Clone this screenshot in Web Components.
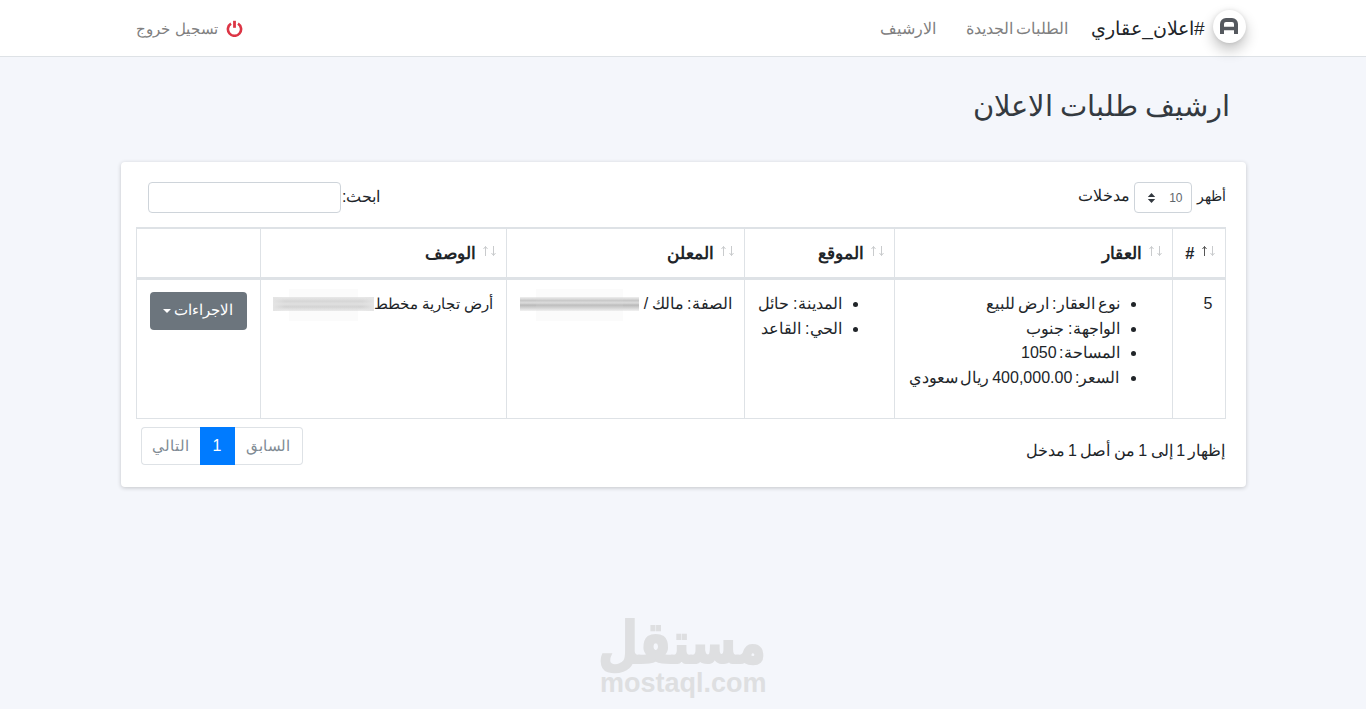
<!DOCTYPE html>
<html dir="rtl"><head><meta charset="utf-8"><title>ارشيف طلبات الاعلان</title>
<style>
html,body{margin:0;height:709px;overflow:hidden}
body{background:#f4f6fb;color:#212529;font:16px/24px "Liberation Sans","Noto Sans",sans-serif}
</style></head><body>
<app-nav></app-nav>
<page-title>ارشيف طلبات الاعلان</page-title>
<archive-card></archive-card>
<water-mark></water-mark>
<script>
function def(name,html){customElements.define(name,class extends HTMLElement{constructor(){super();this.attachShadow({mode:'open'}).innerHTML=html}})}
def('app-nav',`<style>
:host{display:block;height:56px;background:#fff;border-bottom:1px solid #dee2e6}
.in{width:1125px;height:56px;margin:0 auto;display:flex;align-items:center;box-sizing:border-box;padding-top:2px}
.logo{width:33px;height:33px;border-radius:50%;background:#fff;box-shadow:0 7px 14px rgba(0,0,0,.24),0 0 4px rgba(0,0,0,.1);display:flex;align-items:center;justify-content:center;margin-top:-6px;flex:none}
.brand{font-size:19px;margin-right:8px;color:#212529;margin-left:23px}
a{color:#808080;font-size:16px;margin-left:30px;word-spacing:-1px}
.out{margin-right:auto;margin-left:15px;display:flex;align-items:center;gap:7.500px;color:#808080;font-size:15px;word-spacing:1.500px}
svg{display:block}
</style><div class="in">
<span class="logo"><svg width="18" height="16" viewBox="0 0 18 16"><path d="M2 16V6a4 4 0 0 1 4-4h6a4 4 0 0 1 4 4v10" fill="none" stroke="#55595f" stroke-width="4"/><path d="M2 10.500h14" stroke="#55595f" stroke-width="3.500"/></svg></span>
<span class="brand">#اعلان_عقاري</span><a>الطلبات الجديدة</a><a>الارشيف</a>
<span class="out"><svg width="17" height="17" viewBox="0 0 17 17" style="margin-top:-2px"><path d="M5 3.600a6.600 6.600 0 1 0 7 0" fill="none" stroke="#dc3545" stroke-width="2.600"/><path d="M8.500 .800v7" stroke="#dc3545" stroke-width="2.800"/></svg><span>تسجيل خروج</span></span>
</div>`);
def('page-title',`<style>:host{display:block;width:1125px;margin:0 auto;padding:30px 15px 0 0;box-sizing:border-box;font-size:29px;word-spacing:-1px;line-height:38px;color:#343a40;height:105px}</style><slot></slot>`);
def('sort-arrows',`<style>:host{position:absolute;right:8px;top:16px;width:17px;height:12px;display:block}
svg{display:block}path{fill:none;stroke:#c9cbcd;stroke-width:1}
:host([on]) .u{stroke:#555}</style><svg width="17" height="12" viewBox="0 0 17 12"><path class="u" d="M4.500 11V1.500M2.500 4 4.500 1.500 6.500 4"/><path d="M12.500 1v9.500M10.500 8l2 2.500 2-2.500"/></svg>`);
def('archive-card',`<style>
:host{display:block;width:1125px;height:325px;margin:0 auto;background:#fff;border-radius:4px;box-shadow:0 1px 4px rgba(0,0,0,.2);padding:20px 20px 0 15px;box-sizing:border-box;font-size:16px}
.top{display:flex;justify-content:space-between;height:45px}
.len{display:flex;align-items:flex-start;gap:4px;line-height:28px}
.len .s{font-size:14px;margin-left:1px}
.sel{width:58px;height:31px;box-sizing:border-box;border:1px solid #ced4da;border-radius:4px;font-size:12px;color:#5f666c;display:flex;align-items:center;justify-content:space-between;padding:0 8px 0 12px;direction:ltr}
.srch{display:flex;margin-left:12px;line-height:30px;height:31px;font-size:16px}
.srch span:first-child{width:40px}
.inp{width:193px;height:31px;box-sizing:border-box;border:1px solid #ced4da;border-radius:4px;background:#fff}
table{border-collapse:collapse;width:1089px;table-layout:fixed;margin-left:1px}
th,td{border:1px solid #dee2e6;padding:12.500px 12px 0;vertical-align:top;text-align:right;line-height:24.600px}
th{position:relative;font-weight:700;font-size:16.500px;height:50px;box-sizing:border-box;border-top-width:2px;border-bottom-width:3px;vertical-align:middle;padding:2px 30px 0 0}
td{height:140px;box-sizing:border-box;white-space:nowrap}
ul{margin:0;padding:0 40px 0 0}
.w1{word-spacing:-1.500px}.w2{word-spacing:-2px}.w3{word-spacing:-1.700px}.w4{word-spacing:-1px}
.f3{font-size:15px}
.blur{display:inline-block;vertical-align:top;height:14px;margin-top:5px;position:relative;background:linear-gradient(90deg,#e4e4e4,rgba(230,230,230,.35) 12%,rgba(230,230,230,.35) 88%,#e4e4e4),linear-gradient(#ececec,#cdcdcd 30%,#dedede 50%,#c8c8c8 70%,#f0f0f0)}
.blur.d{background:linear-gradient(#f0f0f0,#c8c8c8 25%,#dcdcdc 42%,#b9b9b9 58%,#d0d0d0 75%,#f2f2f2)}
.blur::after{content:"";position:absolute;left:16px;right:16px;top:-8px;bottom:-10px;background:rgba(225,225,225,.12)}
.btn{display:inline-flex;align-items:center;justify-content:center;width:97px;height:38px;box-sizing:border-box;background:#6c757d;border-radius:4px;color:#fff;gap:3px;margin:-.5px 1px 0 0;font-size:15px}
.btn i{border-top:4.800px solid #fff;border-left:4.800px solid transparent;border-right:4.800px solid transparent}
.foot{display:flex;justify-content:space-between;height:47px;align-items:flex-start}
.info{padding-top:20px;word-spacing:-1px}
.pg{display:flex;margin:8px 0 0 5px;height:38px;color:#808a93;font-size:15px}
.pg span{border:1px solid #dee2e6;padding:0 12px;line-height:36px;box-sizing:border-box;height:38px}
.pg .a{background:#007bff;border-color:#007bff;color:#fff;width:35px;padding:0;text-align:center;font-size:16px}
.pg .p{border-radius:0 4px 4px 0;border-left:0;width:68px;padding:0;text-align:center}.pg .n{border-radius:4px 0 0 4px;border-right:0;width:59px;padding:0;text-align:center}
</style>
<div class="top"><div class="len"><span class="s">أظهر</span><span class="sel"><svg width="9" height="12" viewBox="0 0 9 12"><path d="M.8 5 4.500 1 8.200 5zM.8 7 4.500 11 8.200 7z" fill="#343a40"/></svg><span>10</span></span><span>مدخلات</span></div>
<div class="srch"><span>ابحث:</span><span class="inp"></span></div></div>
<table><colgroup><col style="width:53px"><col style="width:278px"><col style="width:150px"><col style="width:238px"><col style="width:246px"><col style="width:124px"></colgroup>
<thead><tr><th>#<sort-arrows on></sort-arrows></th><th>العقار<sort-arrows></sort-arrows></th><th>الموقع<sort-arrows></sort-arrows></th><th>المعلن<sort-arrows></sort-arrows></th><th>الوصف<sort-arrows></sort-arrows></th><th></th></tr></thead>
<tbody><tr><td>5</td>
<td><ul><li class="w1">نوع العقار: ارض للبيع</li><li>الواجهة: جنوب</li><li class="w2">المساحة: 1050</li><li class="w3">السعر: 400,000.00 ريال سعودي</li></ul></td>
<td><ul><li>المدينة: حائل</li><li>الحي: القاعد</li></ul></td>
<td><span class="w4">الصفة: مالك /</span> <span class="blur d" style="width:119px"></span></td>
<td><span class="f3">أرض تجارية مخطط</span><span class="blur" style="width:101px"></span></td>
<td><span class="btn">الاجراءات<i></i></span></td></tr></tbody></table>
<div class="foot"><div class="info">إظهار 1 إلى 1 من أصل 1 مدخل</div><div class="pg"><span class="p">السابق</span><span class="a">1</span><span class="n">التالي</span></div></div>`);
def('water-mark',`<style>:host{position:absolute;left:600px;top:612px;width:166px;height:86px;color:#dedfe1;text-align:center}
.a{font:700 58px/58px "DejaVu Sans",sans-serif;display:block;-webkit-text-stroke:2px #dedfe1;transform:scaleX(.79);white-space:nowrap;width:210px;margin:2px -22px -2px 0}
.b{font:700 27px/26px "Liberation Sans",sans-serif;display:block;direction:ltr;white-space:nowrap;margin-top:-2px}</style><span class="a">مستقل</span><span class="b">mostaql.com</span>`);
</script></body></html>
